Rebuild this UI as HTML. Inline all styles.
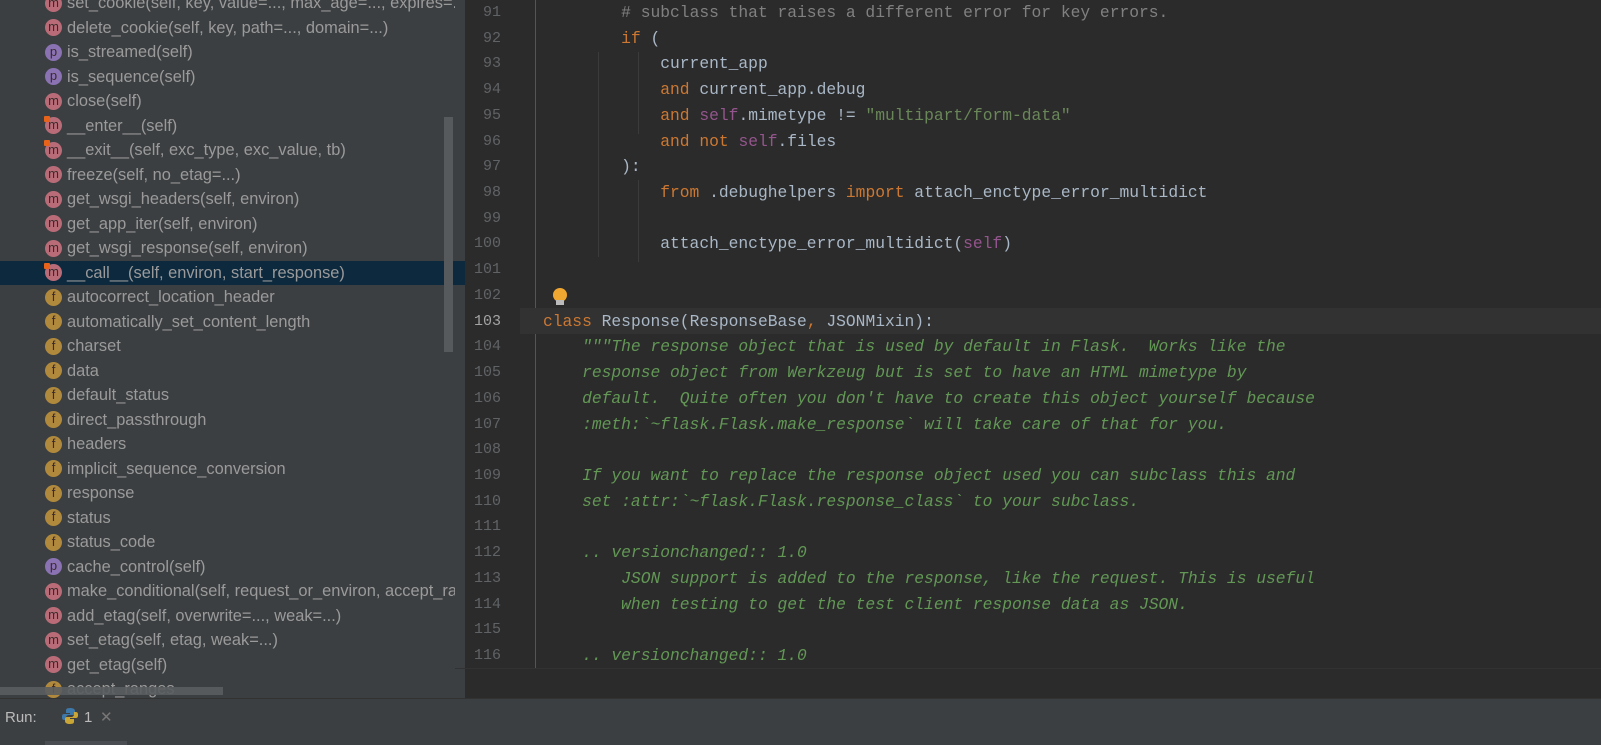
<!DOCTYPE html>
<html><head><meta charset="utf-8"><style>
*{margin:0;padding:0;box-sizing:border-box}
body{width:1601px;height:745px;overflow:hidden;background:#2b2b2b;position:relative;font-family:"Liberation Sans",sans-serif}
#left{position:absolute;left:0;top:0;width:455px;height:698px;background:#3c3f41;overflow:hidden}
.r{position:absolute;left:0;width:455px;height:24.5px;font-size:16.4px;color:#9a9a9a;white-space:nowrap;line-height:24.5px}
.r .i{position:absolute;left:45px;top:3.5px;width:17px;height:17px;border-radius:50%;font-size:13px;line-height:16px;text-align:center;color:#3a2a2a}
.r .t{position:absolute;left:67px;top:0}
.m{background:#b96c78}.f{background:#b0893c}.p{background:#8a72b3}
.lock{position:absolute;left:44px;top:2px;width:6px;height:6px;background:#e8631a;border-radius:1px}
.sel{background:#0d293e}
#ed{position:absolute;left:455px;top:0;width:1146px;height:698px;background:#2b2b2b;overflow:hidden}
.ln{position:absolute;left:0;width:80px;text-align:right;padding-right:34px;font-family:"Liberation Mono",monospace;font-size:15px;color:#606366;height:25.72px;line-height:25.72px}
.cl{position:absolute;left:88px;font-family:"Liberation Mono",monospace;font-size:16.3px;color:#a9b7c6;white-space:pre;height:25.72px;line-height:25.72px}
.k{color:#cc7832}.s{color:#94558d}.st{color:#6a8759}.d{color:#629755;font-style:italic}.c{color:#808080}
#bot{position:absolute;left:0;top:698px;width:1601px;height:47px;background:#3c3f41;border-top:1px solid #323232}
</style></head><body>
<div id="left">
<div class="r" style="top:-9px"><span class="i m">m</span><span class="t">set_cookie(self, key, value=..., max_age=..., expires=...,</span></div>
<div class="r" style="top:15.5px"><span class="i m">m</span><span class="t">delete_cookie(self, key, path=..., domain=...)</span></div>
<div class="r" style="top:40px"><span class="i p">p</span><span class="t">is_streamed(self)</span></div>
<div class="r" style="top:64.5px"><span class="i p">p</span><span class="t">is_sequence(self)</span></div>
<div class="r" style="top:89px"><span class="i m">m</span><span class="t">close(self)</span></div>
<div class="r" style="top:113.5px"><span class="i m">m</span><span class="lock"></span><span class="t">__enter__(self)</span></div>
<div class="r" style="top:138px"><span class="i m">m</span><span class="lock"></span><span class="t">__exit__(self, exc_type, exc_value, tb)</span></div>
<div class="r" style="top:162.5px"><span class="i m">m</span><span class="t">freeze(self, no_etag=...)</span></div>
<div class="r" style="top:187px"><span class="i m">m</span><span class="t">get_wsgi_headers(self, environ)</span></div>
<div class="r" style="top:211.5px"><span class="i m">m</span><span class="t">get_app_iter(self, environ)</span></div>
<div class="r" style="top:236px"><span class="i m">m</span><span class="t">get_wsgi_response(self, environ)</span></div>
<div class="r sel" style="top:260.5px"><span class="i m">m</span><span class="lock"></span><span class="t">__call__(self, environ, start_response)</span></div>
<div class="r" style="top:285px"><span class="i f">f</span><span class="t">autocorrect_location_header</span></div>
<div class="r" style="top:309.5px"><span class="i f">f</span><span class="t">automatically_set_content_length</span></div>
<div class="r" style="top:334px"><span class="i f">f</span><span class="t">charset</span></div>
<div class="r" style="top:358.5px"><span class="i f">f</span><span class="t">data</span></div>
<div class="r" style="top:383px"><span class="i f">f</span><span class="t">default_status</span></div>
<div class="r" style="top:407.5px"><span class="i f">f</span><span class="t">direct_passthrough</span></div>
<div class="r" style="top:432px"><span class="i f">f</span><span class="t">headers</span></div>
<div class="r" style="top:456.5px"><span class="i f">f</span><span class="t">implicit_sequence_conversion</span></div>
<div class="r" style="top:481px"><span class="i f">f</span><span class="t">response</span></div>
<div class="r" style="top:505.5px"><span class="i f">f</span><span class="t">status</span></div>
<div class="r" style="top:530px"><span class="i f">f</span><span class="t">status_code</span></div>
<div class="r" style="top:554.5px"><span class="i p">p</span><span class="t">cache_control(self)</span></div>
<div class="r" style="top:579px"><span class="i m">m</span><span class="t">make_conditional(self, request_or_environ, accept_ranges</span></div>
<div class="r" style="top:603.5px"><span class="i m">m</span><span class="t">add_etag(self, overwrite=..., weak=...)</span></div>
<div class="r" style="top:628px"><span class="i m">m</span><span class="t">set_etag(self, etag, weak=...)</span></div>
<div class="r" style="top:652.5px"><span class="i m">m</span><span class="t">get_etag(self)</span></div>
<div class="r" style="top:677px"><span class="i f">f</span><span class="t">accept_ranges</span></div>
<div style="position:absolute;left:444px;top:117px;width:9px;height:235px;background:#575a5c"></div>
<div style="position:absolute;left:0;top:687px;width:223px;height:8px;background:#5a5d5f;opacity:.9"></div>
</div>
<div id="ed">
<div style="position:absolute;left:0;top:0;width:10px;height:698px;background:#3c3f41"></div>
<div style="position:absolute;left:0;top:261px;width:10px;height:24px;background:#0d293e"></div>
<div style="position:absolute;left:80px;top:0;width:1px;height:668px;background:#555"></div>
<div style="position:absolute;left:65px;top:308px;width:1081px;height:25.7px;background:#323232"></div>
<div style="position:absolute;left:143px;top:52px;width:1px;height:205px;background:#3b3b3b"></div>
<div style="position:absolute;left:183px;top:52px;width:1px;height:82px;background:#3b3b3b"></div>
<div style="position:absolute;left:183px;top:180px;width:1px;height:82px;background:#3b3b3b"></div>
<div style="position:absolute;left:98px;top:288px;width:14px;height:14px;border-radius:50%;background:#f0a732"></div>
<div style="position:absolute;left:101px;top:300px;width:8px;height:5px;background:#bbb"></div>
<div class="ln" style="top:0">91</div><div class="cl" style="top:0">        <span class="c"># subclass that raises a different error for key errors.</span></div>
<div class="ln" style="top:25.72px">92</div><div class="cl" style="top:25.72px">        <span class="k">if</span> (</div>
<div class="ln" style="top:51.44px">93</div><div class="cl" style="top:51.44px">            current_app</div>
<div class="ln" style="top:77.16px">94</div><div class="cl" style="top:77.16px">            <span class="k">and</span> current_app.debug</div>
<div class="ln" style="top:102.88px">95</div><div class="cl" style="top:102.88px">            <span class="k">and</span> <span class="s">self</span>.mimetype != <span class="st">"multipart/form-data"</span></div>
<div class="ln" style="top:128.6px">96</div><div class="cl" style="top:128.6px">            <span class="k">and not</span> <span class="s">self</span>.files</div>
<div class="ln" style="top:154.32px">97</div><div class="cl" style="top:154.32px">        ):</div>
<div class="ln" style="top:180.04px">98</div><div class="cl" style="top:180.04px">            <span class="k">from</span> .debughelpers <span class="k">import</span> attach_enctype_error_multidict</div>
<div class="ln" style="top:205.76px">99</div>
<div class="ln" style="top:231.48px">100</div><div class="cl" style="top:231.48px">            attach_enctype_error_multidict(<span class="s">self</span>)</div>
<div class="ln" style="top:257.2px">101</div>
<div class="ln" style="top:282.92px">102</div>
<div class="ln" style="top:308.64px;color:#a4a3a3">103</div><div class="cl" style="top:308.64px"><span class="k">class</span> Response(ResponseBase<span class="k">,</span> JSONMixin):</div>
<div class="ln" style="top:334.36px">104</div><div class="cl d" style="top:334.36px">    """The response object that is used by default in Flask.  Works like the</div>
<div class="ln" style="top:360.08px">105</div><div class="cl d" style="top:360.08px">    response object from Werkzeug but is set to have an HTML mimetype by</div>
<div class="ln" style="top:385.8px">106</div><div class="cl d" style="top:385.8px">    default.  Quite often you don't have to create this object yourself because</div>
<div class="ln" style="top:411.52px">107</div><div class="cl d" style="top:411.52px">    :meth:`~flask.Flask.make_response` will take care of that for you.</div>
<div class="ln" style="top:437.24px">108</div>
<div class="ln" style="top:462.96px">109</div><div class="cl d" style="top:462.96px">    If you want to replace the response object used you can subclass this and</div>
<div class="ln" style="top:488.68px">110</div><div class="cl d" style="top:488.68px">    set :attr:`~flask.Flask.response_class` to your subclass.</div>
<div class="ln" style="top:514.4px">111</div>
<div class="ln" style="top:540.12px">112</div><div class="cl d" style="top:540.12px">    .. versionchanged:: 1.0</div>
<div class="ln" style="top:565.84px">113</div><div class="cl d" style="top:565.84px">        JSON support is added to the response, like the request. This is useful</div>
<div class="ln" style="top:591.56px">114</div><div class="cl d" style="top:591.56px">        when testing to get the test client response data as JSON.</div>
<div class="ln" style="top:617.28px">115</div>
<div class="ln" style="top:643px">116</div><div class="cl d" style="top:643px">    .. versionchanged:: 1.0</div>
<div style="position:absolute;left:0;top:668px;width:1146px;height:1px;background:#323232"></div>
</div>
<div id="bot">
<span style="position:absolute;left:5px;top:10px;font-size:15px;color:#bbb">Run:</span>
<svg style="position:absolute;left:61px;top:8px" width="18" height="18" viewBox="0 0 18 18"><path d="M9 1c-4 0-4 1.5-4 3v2h4v1H3C1 7 1 9 1 10s0 3 2 3h2v-2c0-2 1-3 3-3h4c1.5 0 2-1 2-2V4c0-2-2-3-5-3z" fill="#3c78aa"/><path d="M9 17c4 0 4-1.5 4-3v-2H9v-1h6c2 0 2-2 2-3s0-3-2-3h-2v2c0 2-1 3-3 3H6c-1.5 0-2 1-2 2v2c0 2 2 3 5 3z" fill="#c9a635"/></svg>
<span style="position:absolute;left:84px;top:10px;font-size:15px;color:#bbb">1</span>
<span style="position:absolute;left:100px;top:9px;font-size:15px;color:#777">✕</span>
<div style="position:absolute;left:45px;top:42px;width:82px;height:4px;background:#4a4e52"></div>
</div>
</body></html>
